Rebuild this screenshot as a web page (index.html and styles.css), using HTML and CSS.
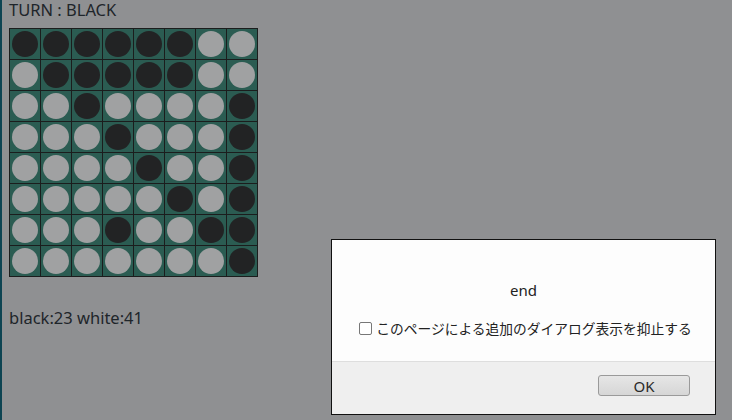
FILE: index.html
```html
<!DOCTYPE html>
<html lang="ja">
<head>
<meta charset="utf-8">
<link rel="stylesheet" href="styles.css">
</head>
<body>
<div class="edge"></div>
<main class="page">
  <div class="turn">TURN : BLACK</div>
  <div class="board" id="board"></div>
  <div class="score">black:23 white:41</div>
</main>
<div class="dialog">
  <div class="dialog-body">
    <div class="msg">end</div>
    <label class="suppress"><span class="box"></span>このページによる追加のダイアログ表示を抑止する</label>
  </div>
  <div class="dialog-foot">
    <button class="ok">OK</button>
  </div>
</div>
<script src="app.js"></script>
</body>
</html>
```
FILE: styles.css
```css
html, body {
  margin: 0;
  padding: 0;
  width: 732px;
  height: 420px;
  overflow: hidden;
  background: #8f9092;
  font-family: "Noto Sans", "Noto Sans CJK JP", sans-serif;
  color: #1e252a;
}
.edge {
  position: absolute;
  left: 0;
  top: 0;
  width: 2px;
  height: 420px;
  background: #0d4452;
}
.page {
  padding: 0 0 0 9px;
}
.turn {
  font-size: 16.5px;
  line-height: 19px;
  height: 28px;
}
.board {
  display: grid;
  grid-template-columns: repeat(8, 30px);
  grid-auto-rows: 30px;
  gap: 1px;
  padding: 1px;
  background: #1b1d1d;
  width: max-content;
}
.cell {
  background: #2b5c52;
  display: flex;
  align-items: center;
  justify-content: center;
}
.disc {
  width: 26px;
  height: 26px;
  border-radius: 50%;
}
.disc.b { background: #222324; }
.disc.w { background: #a0a1a2; }
.score {
  margin-top: 32px;
  font-size: 16.5px;
  line-height: 18px;
}
.dialog {
  position: absolute;
  left: 331px;
  top: 239px;
  width: 383px;
  height: 174px;
  border: 1px solid #111;
  background: #fdfdfd;
  display: flex;
  flex-direction: column;
  font-family: "Noto Sans", "Noto Sans CJK JP", sans-serif;
  color: #222;
}
.dialog-body {
  flex: 1;
  display: flex;
  flex-direction: column;
  align-items: center;
  padding-top: 41px;
}
.msg {
  font-size: 15px;
  line-height: 18px;
}
.suppress {
  margin-top: 20px;
  display: flex;
  align-items: center;
  gap: 4px;
  font-size: 13.75px;
  font-family: "Noto Sans CJK JP", sans-serif;
  line-height: 18px;
  padding-left: 4px;
}
.box {
  width: 11px;
  height: 11px;
  border: 1px solid #777;
  border-radius: 2px;
  background: #fff;
}
.dialog-foot {
  height: 52px;
  background: #efefef;
  border-top: 1px solid #dedede;
  display: flex;
  justify-content: flex-end;
  align-items: flex-start;
  padding-right: 25px;
}
.ok {
  margin-top: 13px;
  width: 92px;
  height: 21px;
  border: 1px solid #9a9a9a;
  border-radius: 3px;
  background: linear-gradient(#e6e6e6, #d6d6d6);
  font-family: "Noto Sans", sans-serif;
  font-size: 15px;
  line-height: 18px;
  color: #2a2a2a;
  padding: 0;
}
```
FILE: app.js
```js
var rows = [
  "BBBBBBWW",
  "WBBBBBWW",
  "WWBWWWWB",
  "WWWBWWWB",
  "WWWWBWWB",
  "WWWWWBWB",
  "WWWBWWBB",
  "WWWWWWWB"
];
var board = document.getElementById("board");
rows.forEach(function (r) {
  for (var i = 0; i < r.length; i++) {
    var c = document.createElement("div");
    c.className = "cell";
    var d = document.createElement("div");
    d.className = "disc " + (r[i] === "B" ? "b" : "w");
    c.appendChild(d);
    board.appendChild(c);
  }
});
```
